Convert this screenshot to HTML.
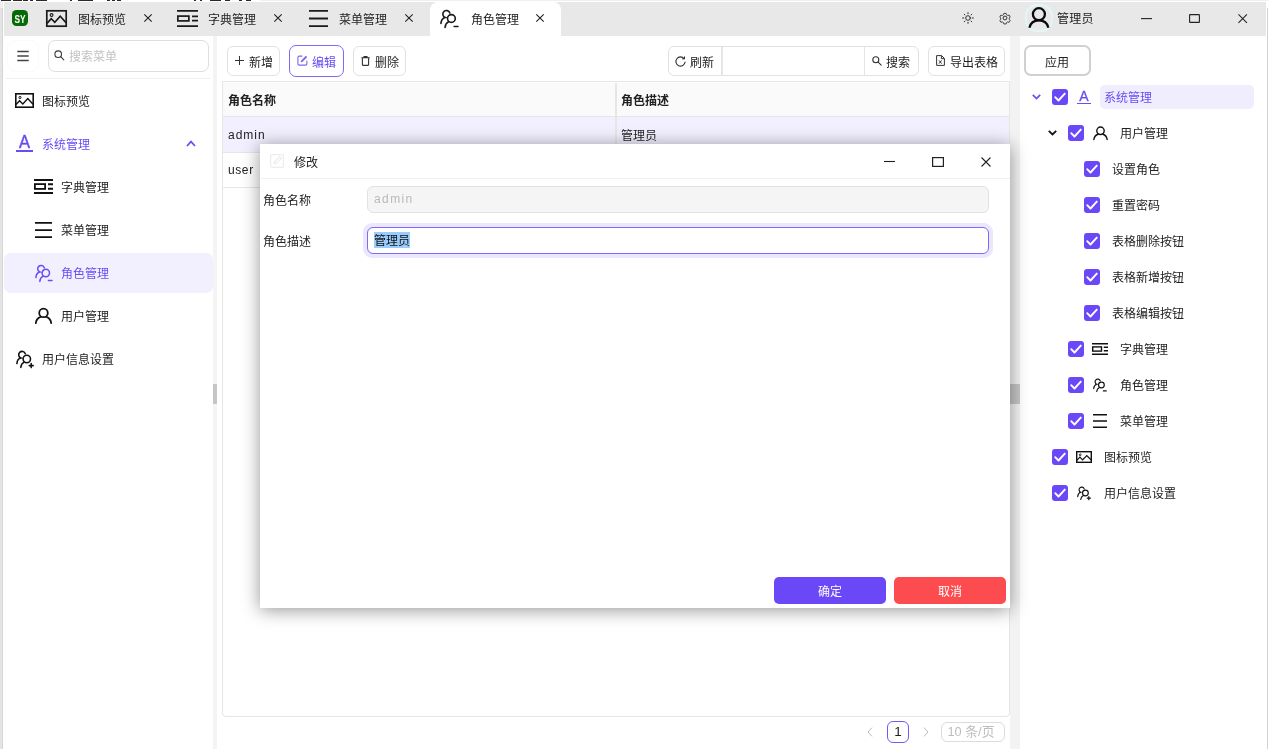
<!DOCTYPE html>
<html lang="zh-CN">
<head>
<meta charset="utf-8">
<title>角色管理</title>
<style>
*{box-sizing:border-box;margin:0;padding:0}
html,body{width:1268px;height:749px;overflow:hidden;background:#fff}
body{position:relative;font-family:"Liberation Sans","Noto Sans CJK SC",sans-serif;font-size:12px;color:#222;line-height:16px}
.abs{position:absolute}
.t{position:absolute;white-space:nowrap;height:16px;line-height:16px;margin-top:1px}
.l{margin-top:0}
svg{position:absolute;overflow:visible}
/* backdrop */
#win{left:3px;top:2px;width:1263px;height:747px;background:#fff}
#winedge{left:0;top:8px;width:3px;height:741px;background:linear-gradient(90deg,#e4e4e4 0,#e4e4e4 2px,#d6d6d6 2px)}
#winedge2{left:0;top:0;width:3px;height:8px;background:#f0f0f0}
#titlebar{left:4px;top:2px;width:1262px;height:34px;background:#e8e8e8}
#acttab{left:430px;top:2px;width:131px;height:34px;background:#fff;border-radius:8px 8px 0 0}
.tabx{stroke:#222;stroke-width:1.1;fill:none}
/* sidebar */
#split1{left:213px;top:36px;width:4px;height:713px;background:#f4f4f4}
#split2{left:1010px;top:36px;width:10px;height:713px;background:#f3f3f3}
#h1{left:213px;top:384px;width:4px;height:20px;background:#c6c6c6}
#h2{left:1010px;top:384px;width:10px;height:20px;background:#c6c6c6}
.btn{position:absolute;height:30px;top:46px;border:1px solid #e2e2e2;border-radius:6px;background:#fff}
#search{left:47.500px;top:40px;width:161px;height:32px;border:1.500px solid #dedede;border-radius:7px;background:#fff}
#selitem{left:4px;top:253px;width:209px;height:40px;background:#f2effe;border-radius:7px}
.pur{color:#6a4bf4}
/* table */
#table{left:222px;top:81px;width:788px;height:636px;border:1px solid #e6e6e6;border-top-width:1.500px;border-radius:0 0 4px 4px;background:#fff}
#thead{left:223px;top:82.500px;width:786px;height:34.500px;background:#fafafa;border-bottom:1px solid #e6e6e6}
#row1{left:223px;top:117px;width:786px;height:36px;background:#f2effe;border-bottom:1px solid #e6e6e6}
#row2{left:223px;top:153px;width:786px;height:35px;background:#fff;border-bottom:1px solid #e6e6e6}
#coldiv{left:615.300px;top:83px;width:1.300px;height:105px;background:#e6e6e6}
.b{font-weight:bold}
/* dialog */
#dlg{left:260px;top:144px;width:750px;height:464px;background:#fff;box-shadow:0 2px 17px rgba(0,0,0,.42)}
#dlgline{left:261px;top:178px;width:749px;height:1px;background:#f0f0f0}
#in1{left:367px;top:186px;width:622px;height:27px;border:1px solid #e2e2e2;border-radius:6px;background:#f5f5f5}
#in2glow{left:363px;top:223px;width:630px;height:35px;border-radius:9px;background:#ebe7fe}
#in2{left:367px;top:227px;width:622px;height:27px;border:1.500px solid #8268fa;border-radius:6px;background:#fff}
#sel{left:374px;top:232px;width:36px;height:16px;background:#99cbfb}
#ok{left:774px;top:577px;width:112px;height:27px;border-radius:5px;background:#6a48f8}
#cancel{left:894px;top:577px;width:112px;height:27px;border-radius:5px;background:#fd4c4f}
.wt{color:#fff}
/* tree */
.cb{position:absolute;width:16px;height:16px;border-radius:3px;background:#6a48f8}
#treesel{left:1100px;top:85px;width:154px;height:24px;border-radius:5px;background:#f0edfe}
</style>
</head>
<body>
<div id="root" style="position:absolute;left:0;top:0;width:1268px;height:749px;will-change:transform">
<!-- window chrome -->
<div class="abs" id="win"></div>
<div class="abs" id="winedge"></div>
<div class="abs" id="winedge2"></div>
<div class="abs" id="titlebar"></div>
<div class="abs" id="acttab"></div>
<div class="abs" style="left:1267px;top:8px;width:1px;height:741px;background:#d2d2d2"></div><div class="abs" style="left:260px;top:0;width:1008px;height:1px;background:#efefef"></div>
<!-- stray pixels of the window behind, along the top edge -->
<div class="abs" style="left:1px;top:0;width:10px;height:1px;background:#2a2a2a"></div><div class="abs" style="left:13px;top:0;width:9px;height:1px;background:#2a2a2a"></div><div class="abs" style="left:23px;top:0;width:5px;height:1px;background:#2a2a2a"></div><div class="abs" style="left:30px;top:0;width:3px;height:1px;background:#2a2a2a"></div><div class="abs" style="left:36px;top:0;width:11px;height:1px;background:#2a2a2a"></div><div class="abs" style="left:70px;top:0;width:2px;height:1px;background:#2a2a2a"></div><div class="abs" style="left:78px;top:0;width:15px;height:1px;background:#2a2a2a"></div><div class="abs" style="left:107px;top:0;width:3px;height:1px;background:#2a2a2a"></div><div class="abs" style="left:112px;top:0;width:3px;height:1px;background:#2a2a2a"></div><div class="abs" style="left:117px;top:0;width:4px;height:1px;background:#2a2a2a"></div><div class="abs" style="left:194px;top:0;width:2px;height:1px;background:#2a2a2a"></div><div class="abs" style="left:200px;top:0;width:2px;height:1px;background:#2a2a2a"></div><div class="abs" style="left:210px;top:0;width:11px;height:1px;background:#2a2a2a"></div><div class="abs" style="left:225px;top:0;width:5px;height:1px;background:#2a2a2a"></div><div class="abs" style="left:239px;top:0;width:3px;height:1px;background:#2a2a2a"></div><div class="abs" style="left:246px;top:0;width:5px;height:1px;background:#2a2a2a"></div>
<!-- ===== title bar ===== -->
<div class="abs" style="left:12px;top:10px;width:16px;height:16px;border-radius:4.5px;background:#076a07"></div>
<div class="t l b wt" style="left:12px;width:16px;text-align:center;font-size:11px;top:11px;transform:scaleX(.76);letter-spacing:-.2px">SY</div>
<!-- tab icons -->
<svg style="left:46px;top:10px" width="21" height="17" viewBox="0 0 21 17"><rect x=".8" y=".8" width="19.400" height="15.400" fill="none" stroke="#1a1a1a" stroke-width="1.700"/><circle cx="5.600" cy="5" r="1.400" fill="none" stroke="#1a1a1a" stroke-width="1.100"/><path d="M1 13.400 5.200 8.600 8.800 12.400 14.200 6.200 20 12.600" fill="none" stroke="#1a1a1a" stroke-width="1.600"/></svg>
<div class="t" style="left:78px;top:11px">图标预览</div>
<svg style="left:144px;top:14px" width="8" height="8" viewBox="0 0 8 8"><path class="tabx" d="M.3.300l7.400 7.400M7.700.3l-7.400 7.400"/></svg>

<svg style="left:177px;top:10px" width="21" height="17" viewBox="0 0 21 17"><path d="M0 .9h21M0 16.100h21M15 6.300h6M15 10.700h6" stroke="#1a1a1a" stroke-width="1.700" fill="none"/><rect x=".85" y="6.100" width="11" height="4.800" fill="none" stroke="#1a1a1a" stroke-width="1.700"/></svg>
<div class="t" style="left:208px;top:11px">字典管理</div>
<svg style="left:274px;top:14px" width="8" height="8" viewBox="0 0 8 8"><path class="tabx" d="M.3.300l7.400 7.400M7.700.3l-7.400 7.400"/></svg>

<svg style="left:309px;top:10px" width="19" height="17" viewBox="0 0 19 17"><path d="M0 .9h19M0 8.500h19M0 16.100h19" stroke="#1a1a1a" stroke-width="1.800" fill="none"/></svg>
<div class="t" style="left:339px;top:11px">菜单管理</div>
<svg style="left:405px;top:14px" width="8" height="8" viewBox="0 0 8 8"><path class="tabx" d="M.3.300l7.400 7.400M7.700.3l-7.400 7.400"/></svg>

<svg style="left:440px;top:9px" width="19" height="19" viewBox="0 0 18 18"><g fill="none" stroke="#1a1a1a" stroke-width="1.550" stroke-linecap="round"><path d="M.9 13.6c.2-3 1.600-5 4-5.600a3.400 3.400 0 1 1 4.400-4.300"/><circle cx="10.800" cy="9" r="3.700"/><path d="M4.800 17.400c.2-2.600 1.400-4.400 3.400-5.300M13.400 16.600h3.600"/></g></svg>
<div class="t" style="left:471px;top:11px">角色管理</div>
<svg style="left:536px;top:14px" width="8" height="8" viewBox="0 0 8 8"><path class="tabx" d="M.3.300l7.400 7.400M7.700.3l-7.400 7.400"/></svg>

<!-- right controls -->
<svg style="left:962px;top:12px" width="12" height="12" viewBox="0 0 12 12"><g fill="none" stroke="#333" stroke-width="1" stroke-linecap="round"><circle cx="6" cy="6" r="2.300"/><path d="M6 .6v1.200M6 10.200v1.200M.6 6h1.200M10.200 6h1.200M2.200 2.200l.8.800M9 9l.8.800M2.200 9.800l.8-.8M9 3l.8-.8"/></g></svg>
<svg style="left:999px;top:12px" width="12" height="12" viewBox="0 0 12 12"><g fill="none" stroke="#333" stroke-width="1"><circle cx="6" cy="6" r="1.900"/><path d="M4.700.9h2.600l.4 1.500 1.300.8 1.500-.5 1.300 2.200-1.100 1.100v1.500l1.100 1.100-1.300 2.200-1.500-.5-1.300.8-.4 1.500h-2.600l-.4-1.500-1.300-.8-1.500.5-1.300-2.200 1.100-1.100v-1.500l-1.100-1.100 1.300-2.200 1.500.5 1.300-.8z" transform="translate(.6 .6) scale(.9)"/></g></svg>
<div class="abs" style="left:1025px;top:4px;width:28px;height:28px;border-radius:12px;border:2px solid #e3f6f6"></div>
<svg style="left:1028px;top:5.700px" width="22" height="24" viewBox="0 0 22 24"><g fill="none" stroke="#0a0a0a" stroke-width="2.300"><circle cx="10.900" cy="8.200" r="6"/><path d="M1.400 21.700C2.400 17.200 6 14.300 10.900 14.300S19.400 17.200 20.400 21.700"/></g></svg>
<div class="t" style="left:1057px;top:10px;letter-spacing:.2px">管理员</div>
<svg style="left:1141px;top:18px" width="11" height="2" viewBox="0 0 11 2"><path d="M0 .6h11" stroke="#222" stroke-width="1.100"/></svg>
<svg style="left:1189px;top:14px" width="11" height="9" viewBox="0 0 11 9"><rect x=".6" y=".6" width="9.800" height="7.800" rx=".5" fill="none" stroke="#222" stroke-width="1.100"/></svg>
<svg style="left:1237.700px;top:13.800px" width="9.400" height="9.400" viewBox="0 0 10 10"><path d="M.5.5l9 9M9.500.5l-9 9" stroke="#222" stroke-width="1.100" fill="none"/></svg>

<!-- ===== sidebar ===== -->
<div class="abs" id="split1"></div>
<div class="abs" id="split2"></div>
<div class="abs" id="h1"></div>
<div class="abs" id="h2"></div>
<div class="abs" style="left:7px;top:40px;width:32px;height:32px;border-radius:8px;border:1px solid #fafafa"></div>
<svg style="left:17px;top:50px" width="12" height="12" viewBox="0 0 12 12"><path d="M.3 1.500h11.400M.3 6h11.400M.3 10.500h11.400" stroke="#444" stroke-width="1.400" fill="none"/></svg>
<div class="abs" id="search"></div>
<svg style="left:54px;top:50px" width="11" height="11" viewBox="0 0 11 11"><g fill="none" stroke="#3a3a3a" stroke-width="1.100" stroke-linecap="round"><circle cx="4.200" cy="4.200" r="3.300"/><path d="M6.700 6.700l3.100 3.100"/></g></svg>
<div class="t" style="left:69px;top:48px;color:#c3c3c3">搜索菜单</div>
<div class="abs" style="left:6px;top:78px;width:204px;height:1px;background:#efefef"></div>

<svg style="left:15px;top:93px" width="19" height="15" viewBox="0 0 19 15"><rect x=".8" y=".8" width="17.400" height="13.400" fill="none" stroke="#111" stroke-width="1.600"/><circle cx="5" cy="4.500" r="1.100" fill="none" stroke="#111" stroke-width="1"/><path d="M1 11.600 4.600 7.800 7.800 11 12.800 5.600 18 11.200" fill="none" stroke="#111" stroke-width="1.400"/></svg>
<div class="t" style="left:42px;top:93px">图标预览</div>

<div class="t pur" style="left:14px;top:131px;width:21px;text-align:center;font-size:18.400px;line-height:20px;height:20px;transform:scaleX(.9);-webkit-text-stroke:.45px #6a4bf4">A</div>
<div class="abs" style="left:16px;top:149.800px;width:17px;height:2px;background:#6a4bf4"></div>
<div class="t pur" style="left:42px;top:136px">系统管理</div>
<svg style="left:186px;top:140px" width="10" height="7" viewBox="0 0 10 7"><path d="M1 6l4-4.400 4 4.400" fill="none" stroke="#6a4bf4" stroke-width="1.700"/></svg>

<svg style="left:34px;top:179px" width="19" height="15" viewBox="0 0 19 15"><path d="M0 .95h19M0 14.050h19M14 5.300h5M14 9.700h5" stroke="#111" stroke-width="1.900" fill="none"/><rect x=".9" y="5.100" width="10.200" height="4.800" fill="none" stroke="#111" stroke-width="1.800"/></svg>
<div class="t" style="left:61px;top:179px">字典管理</div>

<svg style="left:35px;top:222px" width="17" height="16" viewBox="0 0 17 16"><path d="M0 .9h17M0 8h17M0 15.100h17" stroke="#111" stroke-width="1.750" fill="none"/></svg>
<div class="t" style="left:61px;top:222px">菜单管理</div>

<div class="abs" id="selitem"></div>
<svg style="left:35px;top:264px" width="18" height="18" viewBox="0 0 18 18"><g fill="none" stroke="#6a4bf4" stroke-width="1.500" stroke-linecap="round"><path d="M.9 13.600c.2-3 1.600-5 4-5.600a3.400 3.400 0 1 1 4.400-4.300"/><circle cx="10.800" cy="9" r="3.700"/><path d="M4.800 17.400c.2-2.600 1.400-4.400 3.400-5.300M13.400 16.600h3.600"/></g></svg>
<div class="t pur" style="left:61px;top:265px">角色管理</div>

<svg style="left:35px;top:307px" width="17" height="17" viewBox="0 0 21 20"><g fill="none" stroke="#111" stroke-width="2.200" stroke-linecap="round"><circle cx="10.500" cy="6.800" r="5.300"/><path d="M1 19.300c.6-4 3-6.600 6-7.500M20 19.300c-.6-4-3-6.600-6-7.500"/></g></svg>
<div class="t" style="left:61px;top:308px">用户管理</div>

<svg style="left:16px;top:350px" width="18" height="18" viewBox="0 0 18 18"><g fill="none" stroke="#111" stroke-width="1.550" stroke-linecap="round"><path d="M.9 13.600c.2-3 1.600-5 4-5.600a3.400 3.400 0 1 1 4.400-4.300"/><circle cx="10.800" cy="9" r="3.700"/><path d="M4.800 17.400c.2-2.600 1.400-4.400 3.400-5.300M13.200 15.600h4M15.200 13.600v4"/></g></svg>
<div class="t" style="left:42px;top:351px">用户信息设置</div>

<!-- ===== toolbar ===== -->
<div class="btn" style="left:227px;width:53px"></div>
<svg style="left:235px;top:56px" width="9" height="9" viewBox="0 0 9 9"><path d="M4.500 0v9M0 4.500h9" stroke="#333" stroke-width="1" fill="none"/></svg>
<div class="t" style="left:249px;top:54px">新增</div>
<div class="btn" style="left:289px;width:55px;top:45px;height:32px;border:1.500px solid #8069f7;border-radius:7px"></div>
<svg style="left:297px;top:55px" width="11" height="11" viewBox="0 0 11 11"><g fill="none" stroke="#7d66f6" stroke-linecap="round"><path d="M5 1.100H2.200c-.8 0-1.300.5-1.300 1.300v6.400c0 .8.500 1.300 1.300 1.300h6.400c.8 0 1.300-.5 1.300-1.300V6" stroke-width="1.100"/><path d="M4.700 6.300L9 2" stroke-width="1.900"/></g></svg>
<div class="t pur" style="left:312px;top:54px">编辑</div>
<div class="btn" style="left:353px;width:53px"></div>
<svg style="left:361px;top:55.500px" width="9" height="10" viewBox="0 0 9 10"><g fill="none" stroke="#333" stroke-width="1.100"><path d="M.3 1.800h8.400M3 1.600V.6h3v1M1.400 2v6.400c0 .6.400 1 1 1h4.200c.6 0 1-.4 1-1V2"/></g></svg>
<div class="t" style="left:375px;top:54px">删除</div>

<div class="btn" style="left:668px;width:251px"></div>
<div class="abs" style="left:721px;top:47px;width:1.500px;height:28px;background:#e6e6e6"></div>
<div class="abs" style="left:864px;top:47px;width:1px;height:28px;background:#e4e4e4"></div>
<svg style="left:675px;top:55.500px" width="11" height="11" viewBox="0 0 11 11"><path d="M9.12 2.67A4.6 4.6 0 1 0 10.06 6.14" fill="none" stroke="#333" stroke-width="1.100" stroke-linecap="round"/><path d="M9.52 0.47v2.400h-2.400" fill="none" stroke="#333" stroke-width="1"/></svg>
<div class="t" style="left:690px;top:54px">刷新</div>
<svg style="left:872px;top:56px" width="10" height="10" viewBox="0 0 10 10"><g fill="none" stroke="#333" stroke-width="1.100" stroke-linecap="round"><circle cx="3.800" cy="3.800" r="3"/><path d="M6.200 6.200l3 3"/></g></svg>
<div class="t" style="left:886px;top:54px">搜索</div>
<div class="btn" style="left:928px;width:77px"></div>
<svg style="left:936px;top:55px" width="9" height="11" viewBox="0 0 9 11"><g fill="none" stroke="#333" stroke-width="1"><path d="M.6.600h5l2.800 2.800v7H.6z"/><path d="M5.400.6v3h3M3 5.400l2.600 3.200M5.600 5.400L3 8.600"/></g></svg>
<div class="t" style="left:950px;top:54px">导出表格</div>
<div class="abs" style="left:1024px;top:45px;width:67px;height:31px;border:2px solid #d0d0d0;border-radius:7px;background:#fff"></div>
<div class="t" style="left:1045px;top:54px">应用</div>

<!-- ===== table ===== -->
<div class="abs" id="table"></div>
<div class="abs" id="thead"></div>
<div class="abs" id="row1"></div>
<div class="abs" id="row2"></div>
<div class="abs" id="coldiv"></div>
<div class="t b" style="left:228px;top:92px">角色名称</div>
<div class="t b" style="left:621px;top:92px">角色描述</div>
<div class="t l" style="left:228px;top:127px;letter-spacing:1px">admin</div>
<div class="t" style="left:621px;top:127px">管理员</div>
<div class="t l" style="left:228px;top:162px;letter-spacing:.6px">user</div>
<!-- pagination -->
<svg style="left:867px;top:727px" width="6" height="10" viewBox="0 0 6 10"><path d="M5 .6L1 5l4 4.400" fill="none" stroke="#bbb" stroke-width="1"/></svg>
<div class="abs" style="left:887px;top:721px;width:22px;height:22px;border:1px solid #7458f5;border-radius:6px;background:#fff"></div>
<div class="t l" style="left:887px;top:724px;width:22px;text-align:center;font-size:13.500px">1</div>
<svg style="left:923px;top:727px" width="6" height="10" viewBox="0 0 6 10"><path d="M1 .6L5 5 1 9.400" fill="none" stroke="#bbb" stroke-width="1"/></svg>
<div class="abs" style="left:940.500px;top:722px;width:64px;height:19.500px;border:1px solid #dcdcdc;border-radius:6px;background:#fff"></div>
<div class="t l" style="left:947.500px;top:724px;color:#bdbdbd;font-size:12.800px">10 条/页</div>

<!-- ===== dialog ===== -->
<div class="abs" id="dlg"></div>
<div class="abs" id="dlgline"></div>
<svg style="left:270px;top:154px" width="14" height="14" viewBox="0 0 14 14"><g fill="none" stroke="#ececec" stroke-width="1.200"><rect x=".6" y=".6" width="12.800" height="12.800" rx="1.500"/><path d="M4.200 9.800l.5-2.300 5-5 1.800 1.800-5 5z"/></g></svg>
<div class="t" style="left:294px;top:154px">修改</div>
<svg style="left:884px;top:161px" width="11" height="2" viewBox="0 0 11 2"><path d="M0 .5h11" stroke="#222" stroke-width="1.100"/></svg>
<svg style="left:932px;top:157px" width="12" height="10" viewBox="0 0 12 10"><rect x=".6" y=".6" width="10.800" height="8.800" fill="none" stroke="#222" stroke-width="1.200"/></svg>
<svg style="left:981px;top:157px" width="10" height="10" viewBox="0 0 10 10"><path d="M.5.500l9 9M9.500.5l-9 9" stroke="#222" stroke-width="1.100" fill="none"/></svg>
<div class="t" style="left:263px;top:192px">角色名称</div>
<div class="abs" id="in1"></div>
<div class="t l" style="left:374px;top:191px;color:#b9b9b9;letter-spacing:1.400px">admin</div>
<div class="t" style="left:263px;top:233px">角色描述</div>
<div class="abs" id="in2glow"></div>
<div class="abs" id="in2"></div>
<div class="abs" id="sel"></div>
<div class="t" style="left:374px;top:232px;color:#111">管理员</div>
<div class="abs" id="ok"></div>
<div class="t wt" style="left:774px;top:583px;width:112px;text-align:center">确定</div>
<div class="abs" id="cancel"></div>
<div class="t wt" style="left:894px;top:583px;width:112px;text-align:center">取消</div>

<!-- ===== tree ===== -->
<div class="abs" id="treesel"></div>
<svg style="left:1032px;top:94px" width="9" height="6" viewBox="0 0 9 6"><path d="M.8.800l3.700 3.700L8.200.8" fill="none" stroke="#6a4bf4" stroke-width="1.700"/></svg>
<div class="cb" style="left:1052px;top:89px"></div><svg style="left:1054px;top:92px" width="12" height="10" viewBox="0 0 12 10"><path d="M1.200 5.200l3.300 3.300L10.800 1.600" fill="none" stroke="#fff" stroke-width="1.900" stroke-linecap="round" stroke-linejoin="round"/></svg>
<div class="t pur" style="left:1077px;top:86px;width:14px;text-align:center;font-size:14px;line-height:18px;height:18px;-webkit-text-stroke:.3px #6a4bf4">A</div><div class="abs" style="left:1077px;top:102.500px;width:14px;height:1.400px;background:#6a4bf4"></div>
<div class="t pur" style="left:1104px;top:89px">系统管理</div>
<svg style="left:1048px;top:130px" width="9" height="6" viewBox="0 0 9 6"><path d="M.8.800l3.700 3.700L8.200.8" fill="none" stroke="#111" stroke-width="1.800"/></svg>
<div class="cb" style="left:1068px;top:125px"></div><svg style="left:1070px;top:128px" width="12" height="10" viewBox="0 0 12 10"><path d="M1.200 5.200l3.300 3.300L10.800 1.600" fill="none" stroke="#fff" stroke-width="1.900" stroke-linecap="round" stroke-linejoin="round"/></svg>
<svg style="left:1093px;top:126px" width="15" height="14" viewBox="0 0 21 20"><g fill="none" stroke="#111" stroke-width="2" stroke-linecap="round"><circle cx="10.500" cy="6.800" r="5.300"/><path d="M1 19.300c.6-4 3-6.600 6-7.500M20 19.300c-.6-4-3-6.600-6-7.500"/></g></svg>
<div class="t " style="left:1120px;top:125px">用户管理</div>
<div class="cb" style="left:1084px;top:161px"></div><svg style="left:1086px;top:164px" width="12" height="10" viewBox="0 0 12 10"><path d="M1.200 5.200l3.300 3.300L10.800 1.600" fill="none" stroke="#fff" stroke-width="1.900" stroke-linecap="round" stroke-linejoin="round"/></svg>
<div class="t " style="left:1112px;top:161px">设置角色</div>
<div class="cb" style="left:1084px;top:197px"></div><svg style="left:1086px;top:200px" width="12" height="10" viewBox="0 0 12 10"><path d="M1.200 5.200l3.300 3.300L10.800 1.600" fill="none" stroke="#fff" stroke-width="1.900" stroke-linecap="round" stroke-linejoin="round"/></svg>
<div class="t " style="left:1112px;top:197px">重置密码</div>
<div class="cb" style="left:1084px;top:233px"></div><svg style="left:1086px;top:236px" width="12" height="10" viewBox="0 0 12 10"><path d="M1.200 5.200l3.300 3.300L10.800 1.600" fill="none" stroke="#fff" stroke-width="1.900" stroke-linecap="round" stroke-linejoin="round"/></svg>
<div class="t " style="left:1112px;top:233px">表格删除按钮</div>
<div class="cb" style="left:1084px;top:269px"></div><svg style="left:1086px;top:272px" width="12" height="10" viewBox="0 0 12 10"><path d="M1.200 5.200l3.300 3.300L10.800 1.600" fill="none" stroke="#fff" stroke-width="1.900" stroke-linecap="round" stroke-linejoin="round"/></svg>
<div class="t " style="left:1112px;top:269px">表格新增按钮</div>
<div class="cb" style="left:1084px;top:305px"></div><svg style="left:1086px;top:308px" width="12" height="10" viewBox="0 0 12 10"><path d="M1.200 5.200l3.300 3.300L10.800 1.600" fill="none" stroke="#fff" stroke-width="1.900" stroke-linecap="round" stroke-linejoin="round"/></svg>
<div class="t " style="left:1112px;top:305px">表格编辑按钮</div>
<div class="cb" style="left:1068px;top:341px"></div><svg style="left:1070px;top:344px" width="12" height="10" viewBox="0 0 12 10"><path d="M1.200 5.200l3.300 3.300L10.800 1.600" fill="none" stroke="#fff" stroke-width="1.900" stroke-linecap="round" stroke-linejoin="round"/></svg>
<svg style="left:1092px;top:343px" width="16" height="12" viewBox="0 0 16 12"><path d="M0 .7h16M0 11.300h16M11.800 4.200h4.200M11.800 7.800h4.200" stroke="#111" stroke-width="1.400" fill="none"/><rect x=".7" y="3.900" width="8.800" height="4.200" fill="none" stroke="#111" stroke-width="1.400"/></svg>
<div class="t " style="left:1120px;top:341px">字典管理</div>
<div class="cb" style="left:1068px;top:377px"></div><svg style="left:1070px;top:380px" width="12" height="10" viewBox="0 0 12 10"><path d="M1.200 5.200l3.300 3.300L10.800 1.600" fill="none" stroke="#fff" stroke-width="1.900" stroke-linecap="round" stroke-linejoin="round"/></svg>
<svg style="left:1093px;top:378px" width="14" height="14" viewBox="0 0 18 18"><g fill="none" stroke="#111" stroke-width="1.500" stroke-linecap="round"><path d="M.9 13.600c.2-3 1.600-5 4-5.600a3.400 3.400 0 1 1 4.400-4.300"/><circle cx="10.800" cy="9" r="3.700"/><path d="M4.800 17.400c.2-2.600 1.400-4.400 3.400-5.300M13.400 16.600h3.600"/></g></svg>
<div class="t " style="left:1120px;top:377px">角色管理</div>
<div class="cb" style="left:1068px;top:413px"></div><svg style="left:1070px;top:416px" width="12" height="10" viewBox="0 0 12 10"><path d="M1.200 5.200l3.300 3.300L10.800 1.600" fill="none" stroke="#fff" stroke-width="1.900" stroke-linecap="round" stroke-linejoin="round"/></svg>
<svg style="left:1093px;top:414px" width="14" height="14" viewBox="0 0 14 14"><path d="M0 .7h14M0 7h14M0 13.300h14" stroke="#111" stroke-width="1.400" fill="none"/></svg>
<div class="t " style="left:1120px;top:413px">菜单管理</div>
<div class="cb" style="left:1052px;top:449px"></div><svg style="left:1054px;top:452px" width="12" height="10" viewBox="0 0 12 10"><path d="M1.200 5.200l3.300 3.300L10.800 1.600" fill="none" stroke="#fff" stroke-width="1.900" stroke-linecap="round" stroke-linejoin="round"/></svg>
<svg style="left:1076px;top:451px" width="16" height="12" viewBox="0 0 16 12"><rect x=".7" y=".7" width="14.600" height="10.600" fill="none" stroke="#111" stroke-width="1.400"/><circle cx="4.200" cy="3.800" r=".9" fill="none" stroke="#111" stroke-width=".9"/><path d="M.9 9.400 3.900 6.200 6.600 8.900 10.800 4.500 15.200 9" fill="none" stroke="#111" stroke-width="1.200"/></svg>
<div class="t " style="left:1104px;top:449px">图标预览</div>
<div class="cb" style="left:1052px;top:485px"></div><svg style="left:1054px;top:488px" width="12" height="10" viewBox="0 0 12 10"><path d="M1.200 5.200l3.300 3.300L10.800 1.600" fill="none" stroke="#fff" stroke-width="1.900" stroke-linecap="round" stroke-linejoin="round"/></svg>
<svg style="left:1077px;top:486px" width="14" height="14" viewBox="0 0 18 18"><g fill="none" stroke="#111" stroke-width="1.500" stroke-linecap="round"><path d="M.9 13.600c.2-3 1.600-5 4-5.600a3.400 3.400 0 1 1 4.400-4.300"/><circle cx="10.800" cy="9" r="3.700"/><path d="M4.800 17.400c.2-2.600 1.400-4.400 3.400-5.300M13.200 15.600h4M15.200 13.600v4"/></g></svg>
<div class="t " style="left:1104px;top:485px">用户信息设置</div>

</div>
</body>
</html>
